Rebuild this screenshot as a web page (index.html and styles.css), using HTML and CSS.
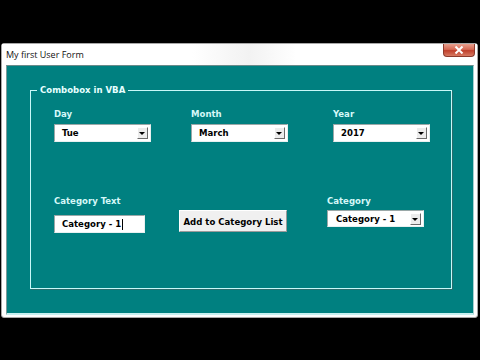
FILE: index.html
```html
<!DOCTYPE html>
<html>
<head>
<meta charset="utf-8">
<link rel="stylesheet" href="styles.css">
</head>
<body>
<div class="window">
  <div class="titlebar">
    <span class="title">My first User Form</span>
    <span class="close"><svg width="10" height="8" viewBox="0 0 10 8"><path d="M1.5 0.5 L8.5 7.5 M8.5 0.5 L1.5 7.5" stroke="#fff" stroke-width="2"/></svg></span>
  </div>
  <div class="client">
    <fieldset class="frame">
      <legend class="legend">Combobox in VBA</legend>
      <div class="row row-top">
        <div class="field f-day">
          <div class="label">Day</div>
          <div class="combo"><span class="value">Tue</span><span class="drop"></span></div>
        </div>
        <div class="field f-month">
          <div class="label">Month</div>
          <div class="combo"><span class="value">March</span><span class="drop"></span></div>
        </div>
        <div class="field f-year">
          <div class="label">Year</div>
          <div class="combo"><span class="value">2017</span><span class="drop"></span></div>
        </div>
      </div>
      <div class="row row-bottom">
        <div class="field f-text">
          <div class="label">Category Text</div>
          <div class="textbox"><span class="value">Category - 1</span><span class="caret"></span></div>
        </div>
        <div class="btn">Add to Category List</div>
        <div class="field f-cat">
          <div class="label">Category</div>
          <div class="combo combo-cat"><span class="value">Category - 1</span><span class="drop"></span></div>
        </div>
      </div>
    </fieldset>
  </div>
</div>
</body>
</html>
```
FILE: styles.css
```css
html, body {
  margin: 0;
  padding: 0;
  background: #000;
  width: 480px;
  height: 360px;
  overflow: hidden;
}
.window {
  margin: 43px 0 0 1px;
  width: 475px;
  height: 273px;
  background: #fff;
  border: 1px solid #a8a8a8;
  border-radius: 3px;
  display: flex;
  flex-direction: column;
}
.titlebar {
  height: 21px;
  display: flex;
  justify-content: space-between;
  align-items: flex-start;
  background: linear-gradient(90deg, #fff 0%, #fff 40%, #f2f2f2 52%, #fff 62%, #fff 100%);
}
.title {
  font-family: "Open Sans", "Noto Sans", sans-serif;
  font-size: 9px;
  color: #111;
  margin: 5px 0 0 4px;
  line-height: 12px;
}
.close {
  width: 32px;
  height: 13px;
  margin-right: 2px;
  background: linear-gradient(#e8a08e 0%, #d56a55 45%, #c0402c 55%, #d77a62 100%);
  border: 1px solid #8c3a2c;
  border-top: none;
  border-radius: 0 0 4px 4px;
  display: flex;
  align-items: center;
  justify-content: center;
  box-sizing: border-box;
}
.client {
  margin: 0 3px 2px 4px;
  flex: 1;
  background: #008080;
  border-left: 1px solid #7c9a9a;
  border-top: 1px solid #6a8a8a;
  border-right: 1px solid #a8d0d0;
  border-bottom: 2px solid #c8f0f0;
  display: flex;
  flex-direction: column;
}
.frame {
  margin: 18px 0 0 23px;
  width: 422px;
  height: 205px;
  box-sizing: border-box;
  padding: 0;
  border: 1px solid #c8f8f8;
  box-shadow: 1px 1px 0 #2a6c6c;
  font-family: "DejaVu Sans Condensed", "DejaVu Sans", sans-serif;
  font-weight: bold;
  font-size: 9.5px;
}
.legend {
  color: #e6ffff;
  padding: 0 3px;
  margin-left: 6px;
  line-height: 12px;
}
.row {
  display: flex;
  align-items: flex-start;
  padding-left: 23px;
}
.row-top {
  margin-top: 12px;
}
.row-bottom {
  margin-top: 53px;
}
.label {
  color: #d6f8f8;
  line-height: 12px;
  height: 12px;
}
.field { display: flex; flex-direction: column; }
.f-month { margin-left: 40px; }
.f-year { margin-left: 45px; }
.combo {
  margin-top: 4px;
  width: 97px;
  height: 18px;
  box-sizing: border-box;
  background: #fff;
  border-top: 1px solid #9aa8a8;
  border-left: 1px solid #9aa8a8;
  border-right: 1px solid #e8f0f0;
  border-bottom: 1px solid #e8f0f0;
  display: flex;
  align-items: center;
  justify-content: space-between;
  color: #000;
}
.value {
  margin-left: 7px;
  line-height: 12px;
}
.drop {
  width: 11px;
  height: 12px;
  margin-right: 2px;
  box-sizing: border-box;
  background: #ececec;
  border-top: 1px solid #fff;
  border-left: 1px solid #fff;
  border-right: 1px solid #6a6a6a;
  border-bottom: 1px solid #6a6a6a;
  position: relative;
}
.drop::after {
  content: "";
  position: absolute;
  left: 1px;
  top: 4px;
  border-left: 3px solid transparent;
  border-right: 3px solid transparent;
  border-top: 3px solid #000;
}
.textbox {
  margin-top: 8px;
  width: 91px;
  height: 18px;
  box-sizing: border-box;
  background: #fff;
  border-top: 1px solid #9aa8a8;
  border-left: 1px solid #9aa8a8;
  border-right: 1px solid #e8f0f0;
  border-bottom: 1px solid #e8f0f0;
  display: flex;
  align-items: center;
  color: #000;
}
.caret {
  width: 1px;
  height: 11px;
  background: #000;
  margin-left: 1px;
}
.btn {
  margin: 15px 0 0 34px;
  width: 108px;
  height: 22px;
  box-sizing: border-box;
  background: #f0f0f0;
  border-top: 1px solid #fff;
  border-left: 1px solid #fff;
  border-right: 1px solid #9a9a9a;
  border-bottom: 1px solid #9a9a9a;
  color: #000;
  display: flex;
  align-items: center;
  justify-content: center;
}
.f-cat { margin-left: 40px; }
.combo-cat {
  margin-top: 3px;
  height: 17px;
}
.combo-cat .value { margin-left: 8px; }
```
